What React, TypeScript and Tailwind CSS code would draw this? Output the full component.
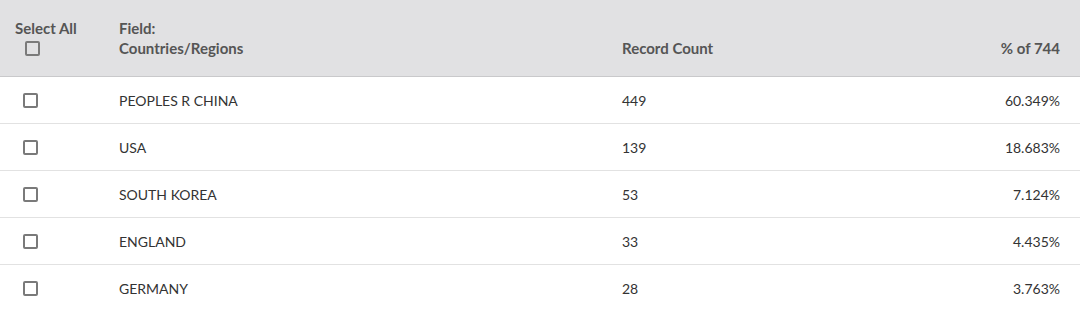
import React from "react";

const rows = [
  { name: "PEOPLES R CHINA", count: "449", pct: "60.349%" },
  { name: "USA", count: "139", pct: "18.683%" },
  { name: "SOUTH KOREA", count: "53", pct: "7.124%" },
  { name: "ENGLAND", count: "33", pct: "4.435%" },
  { name: "GERMANY", count: "28", pct: "3.763%" },
];

function Box() {
  return <span className="block w-[15px] h-[15px] border-2 border-[#7a7a7a] rounded-[2px]" />;
}

export default function App() {
  return (
    <div
      className="w-[1080px] h-[311px] bg-white text-[#333] overflow-hidden"
      style={{ fontFamily: "Lato, 'Noto Sans', sans-serif" }}
    >
      <div className="grid grid-cols-[119px_503px_1fr_auto] h-[77px] bg-[#e1e1e3] border-b border-[#c9c9cb] text-[15px] font-bold text-[#555] pr-[20px]">
        <div className="flex flex-col pl-[15px] pt-[18px]">
          <span className="leading-[20px]">Select All</span>
          <span className="mt-[3px] ml-[10px]">
            <Box />
          </span>
        </div>
        <div className="flex flex-col pt-[18px] leading-[20px]">
          <span>Field:</span>
          <span>Countries/Regions</span>
        </div>
        <div className="pt-[38px] leading-[20px]">Record Count</div>
        <div className="pt-[38px] leading-[20px] text-right">% of 744</div>
      </div>
      {rows.map((r, i) => (
        <div
          key={r.name}
          className={`grid grid-cols-[119px_503px_1fr_auto] items-center h-[47px] pr-[20px] text-[14px] ${
            i < rows.length - 1 ? "border-b border-[#e2e2e2]" : ""
          }`}
        >
          <div className="pl-[23px]">
            <Box />
          </div>
          <div>{r.name}</div>
          <div>{r.count}</div>
          <div className="text-right">{r.pct}</div>
        </div>
      ))}
    </div>
  );
}
